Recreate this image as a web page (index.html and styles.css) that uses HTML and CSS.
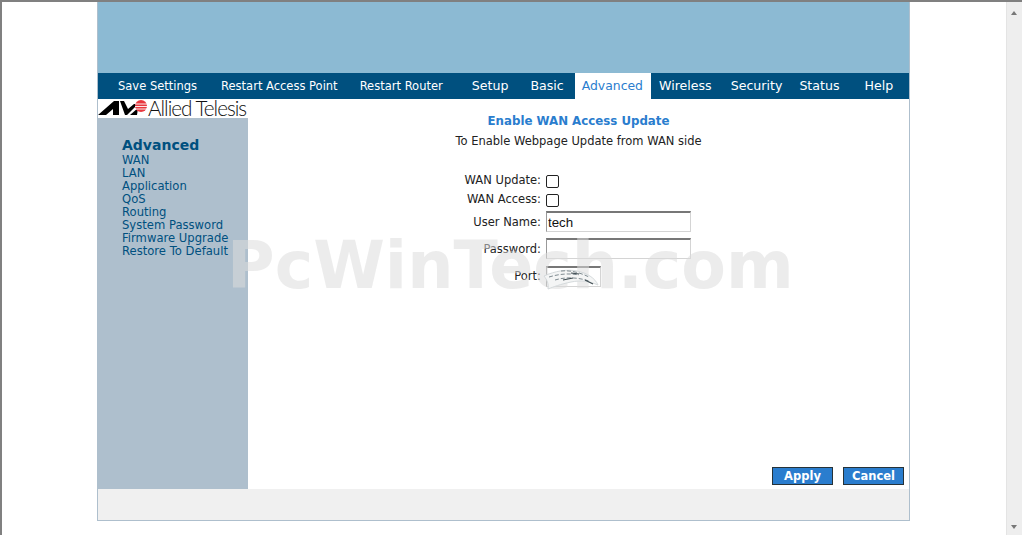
FILE: index.html
```html
<!DOCTYPE html>
<html lang="en">
<head>
    <meta charset="UTF-8">
    <title>Enable WAN Access Update</title>
    <link rel="stylesheet" href="styles.css">
</head>
<body>
    <div class="viewport">
        <div class="wrapper">
            <div class="banner"></div>
            <div class="nav">
                <a class="nav-save">Save Settings</a>
                <a class="nav-restart-ap">Restart Access Point</a>
                <a class="nav-restart-router">Restart Router</a>
                <a class="tab tab-setup">Setup</a>
                <a class="tab tab-basic">Basic</a>
                <a class="tab tab-active">Advanced</a>
                <a class="tab tab-wireless">Wireless</a>
                <a class="tab tab-security">Security</a>
                <a class="tab tab-status">Status</a>
                <a class="tab tab-help">Help</a>
            </div>
            <div class="body-row">
                <div class="sidebar">
                    <div class="logo">
                        <svg class="logo-mark" width="50" height="19" viewBox="0 0 50 19">
                            <polygon points="0,16 16,2 21,2 21,16 15,16 15,10 8,16" fill="#000"/>
                            <polygon points="22,2 26,2 30,10 36,5 40,5 29,16 27,16" fill="#000"/>
                            <polygon points="32,16 40,9 39,16" fill="#000"/>
                            <circle cx="43" cy="7" r="6" fill="#e8383f"/>
                            <path d="M37 5h12M37 7.5h12M37 10h12" stroke="#fff" stroke-width="0.9"/>
                        </svg>
                        <span class="logo-text">Allied Telesis</span>
                    </div>
                    <div class="side-menu">
                        <h3>Advanced</h3>
                        <a>WAN</a>
                        <a>LAN</a>
                        <a>Application</a>
                        <a>QoS</a>
                        <a>Routing</a>
                        <a>System Password</a>
                        <a>Firmware Upgrade</a>
                        <a>Restore To Default</a>
                    </div>
                </div>
                <div class="main">
                    <h2>Enable WAN Access Update</h2>
                    <p class="subtitle">To Enable Webpage Update from WAN side</p>
                    <div class="form">
                        <label class="label-check">WAN Update:</label>
                        <span><input type="checkbox" class="check"></span>
                        <label class="label-check">WAN Access:</label>
                        <span><input type="checkbox" class="check"></span>
                        <label>User Name:</label>
                        <span><input type="text" class="field" value="tech"></span>
                        <label>Password:</label>
                        <span><input type="text" class="field"></span>
                        <label>Port:</label>
                        <span><input type="text" class="field field-port"></span>
                    </div>
                    <div class="actions">
                        <button>Apply</button>
                        <button>Cancel</button>
                    </div>
                </div>
            </div>
            <div class="footer"></div>
        </div>
        <div class="watermark">PcWinTech.com</div>
        <svg class="swirl" width="56" height="22" viewBox="0 0 56 22">
            <path d="M1 8C12 3 24 1 34 3C44 5 52 10 55 17C46 13 38 12 28 14C18 16 10 19 5 21C6 16 4 12 1 8Z" fill="#f4f5f5" stroke="#d5dadc" stroke-width="1"/>
            <path d="M6 9C16 6 26 5 36 7M12 12C22 9 34 9 46 13M18 3C28 2 38 5 46 9" fill="none" stroke="#7f8b91" stroke-width="1" stroke-dasharray="4 2"/>
            <path d="M42 12l8 4M20 12l10-2M28 5l8 1" fill="none" stroke="#3f4c52" stroke-width="1.1"/>
        </svg>
    </div>
    <div class="scrollbar">
        <span class="arrow-up"></span>
        <span class="arrow-down"></span>
    </div>
</body>
</html>
```

FILE: styles.css
```css
html, body {
    height: 100%;
}
body {
    display: flex;
    margin: 0;
    height: 535px;
    overflow: hidden;
    font-family: "DejaVu Sans", Verdana, sans-serif;
    font-size: 11px;
    background-color: #fff;
    border-top: 2px solid #808080;
    border-left: 2px solid #808080;
    box-sizing: border-box;
}
.viewport {
    flex: 1;
    position: relative;
    padding-left: 95px;
}
.wrapper {
    width: 811px;
    height: 518px;
    display: flex;
    flex-direction: column;
    border: 1px solid #aebfcd;
    border-top: none;
}
.banner {
    height: 71px;
    background-color: #8cbad3;
}
.nav {
    height: 26px;
    display: flex;
    align-items: stretch;
    background-color: #00507f;
    color: #fff;
    font-size: 11.5px;
    line-height: 26px;
    white-space: nowrap;
}
.nav a {
    display: block;
}
.nav .tab {
    font-size: 12.6px;
}
.nav-save {
    margin-left: 20px;
}
.nav-restart-ap {
    margin-left: 24px;
}
.nav-restart-router {
    margin-left: 22px;
}
.tab-setup {
    margin-left: 29px;
}
.tab-basic {
    margin-left: 22px;
}
.nav .tab-active {
    margin-left: 11px;
    padding: 0 8px 0 7px;
    font-size: 12.4px;
    background-color: #fff;
    color: #2a7dce;
}
.tab-wireless {
    margin-left: 8px;
}
.tab-security {
    margin-left: 19px;
}
.tab-status {
    margin-left: 17px;
}
.tab-help {
    margin-left: 25px;
}
.body-row {
    flex: 1;
    display: flex;
}
.sidebar {
    width: 150px;
    background-color: #aebfcd;
}
.logo {
    height: 19px;
    display: flex;
    align-items: center;
    background-color: #fff;
}
.logo-text {
    font-family: "Lato", sans-serif;
    font-weight: 300;
    font-size: 20.7px;
    letter-spacing: -1px;
    color: #111;
    line-height: 19px;
}
.side-menu {
    padding: 19px 0 0 24px;
    color: #00507f;
    font-size: 11.6px;
    line-height: 13px;
}
.side-menu h3 {
    margin: 0;
    font-size: 14px;
    line-height: 17px;
}
.side-menu a {
    display: block;
    white-space: nowrap;
}
.main {
    flex: 1;
    display: flex;
    flex-direction: column;
    background-color: #fff;
    color: #222;
}
.main h2 {
    margin: 15px 0 0;
    text-align: center;
    font-size: 11.8px;
    line-height: 15px;
    color: #2a7dce;
}
.subtitle {
    margin: 5px 0 0;
    text-align: center;
    font-size: 11.5px;
    line-height: 15px;
}
.form {
    margin-top: 22.5px;
    display: grid;
    grid-template-columns: 293px 1fr;
    grid-template-rows: 19px 19px 24px 30px 25px;
    column-gap: 5px;
    font-size: 11.5px;
}
.form label {
    justify-self: end;
    align-self: center;
    white-space: nowrap;
}
.form .label-check {
    padding-bottom: 2px;
}
.form span {
    display: flex;
    align-items: center;
}
.check {
    appearance: none;
    width: 13px;
    height: 13px;
    margin: 0;
    background-color: #fff;
    border: 1px solid #222;
    border-radius: 2px;
}
.field {
    box-sizing: border-box;
    width: 145px;
    height: 21px;
    padding: 0 1px;
    font-family: "Liberation Sans", Arial, sans-serif;
    font-size: 13.3px;
    color: #111;
    border: 1px solid #d4d4d4;
    border-top: 2px solid #777;
    border-left-color: #999;
    outline: none;
}
.field-port {
    width: 55px;
}
.actions {
    margin-top: auto;
    margin-bottom: 4px;
    display: flex;
    justify-content: flex-end;
    gap: 10px;
    padding-right: 5px;
}
.actions button {
    width: 61px;
    height: 18px;
    padding: 0;
    font-family: "DejaVu Sans", Verdana, sans-serif;
    font-size: 11.5px;
    font-weight: bold;
    line-height: 15px;
    color: #fff;
    background-color: #2a7dce;
    border: 1px solid #263238;
}
.footer {
    height: 31px;
    background-color: #f0f0f0;
}
.swirl {
    position: absolute;
    left: 541px;
    top: 266px;
}
.watermark {
    position: absolute;
    left: 225px;
    top: 225px;
    font-size: 65px;
    line-height: 78px;
    font-weight: bold;
    color: rgba(219, 219, 219, 0.54);
    white-space: nowrap;
    pointer-events: none;
}
.scrollbar {
    width: 16px;
    position: relative;
    background-color: #eee;
    border-left: 1px solid #e4e4e4;
    box-sizing: border-box;
}
.arrow-up, .arrow-down {
    position: absolute;
    left: 4px;
    width: 0;
    height: 0;
    border-left: 3.5px solid transparent;
    border-right: 3.5px solid transparent;
}
.arrow-up {
    top: 9px;
    border-bottom: 4px solid #777;
}
.arrow-down {
    bottom: 6px;
    border-top: 4px solid #777;
}
```
